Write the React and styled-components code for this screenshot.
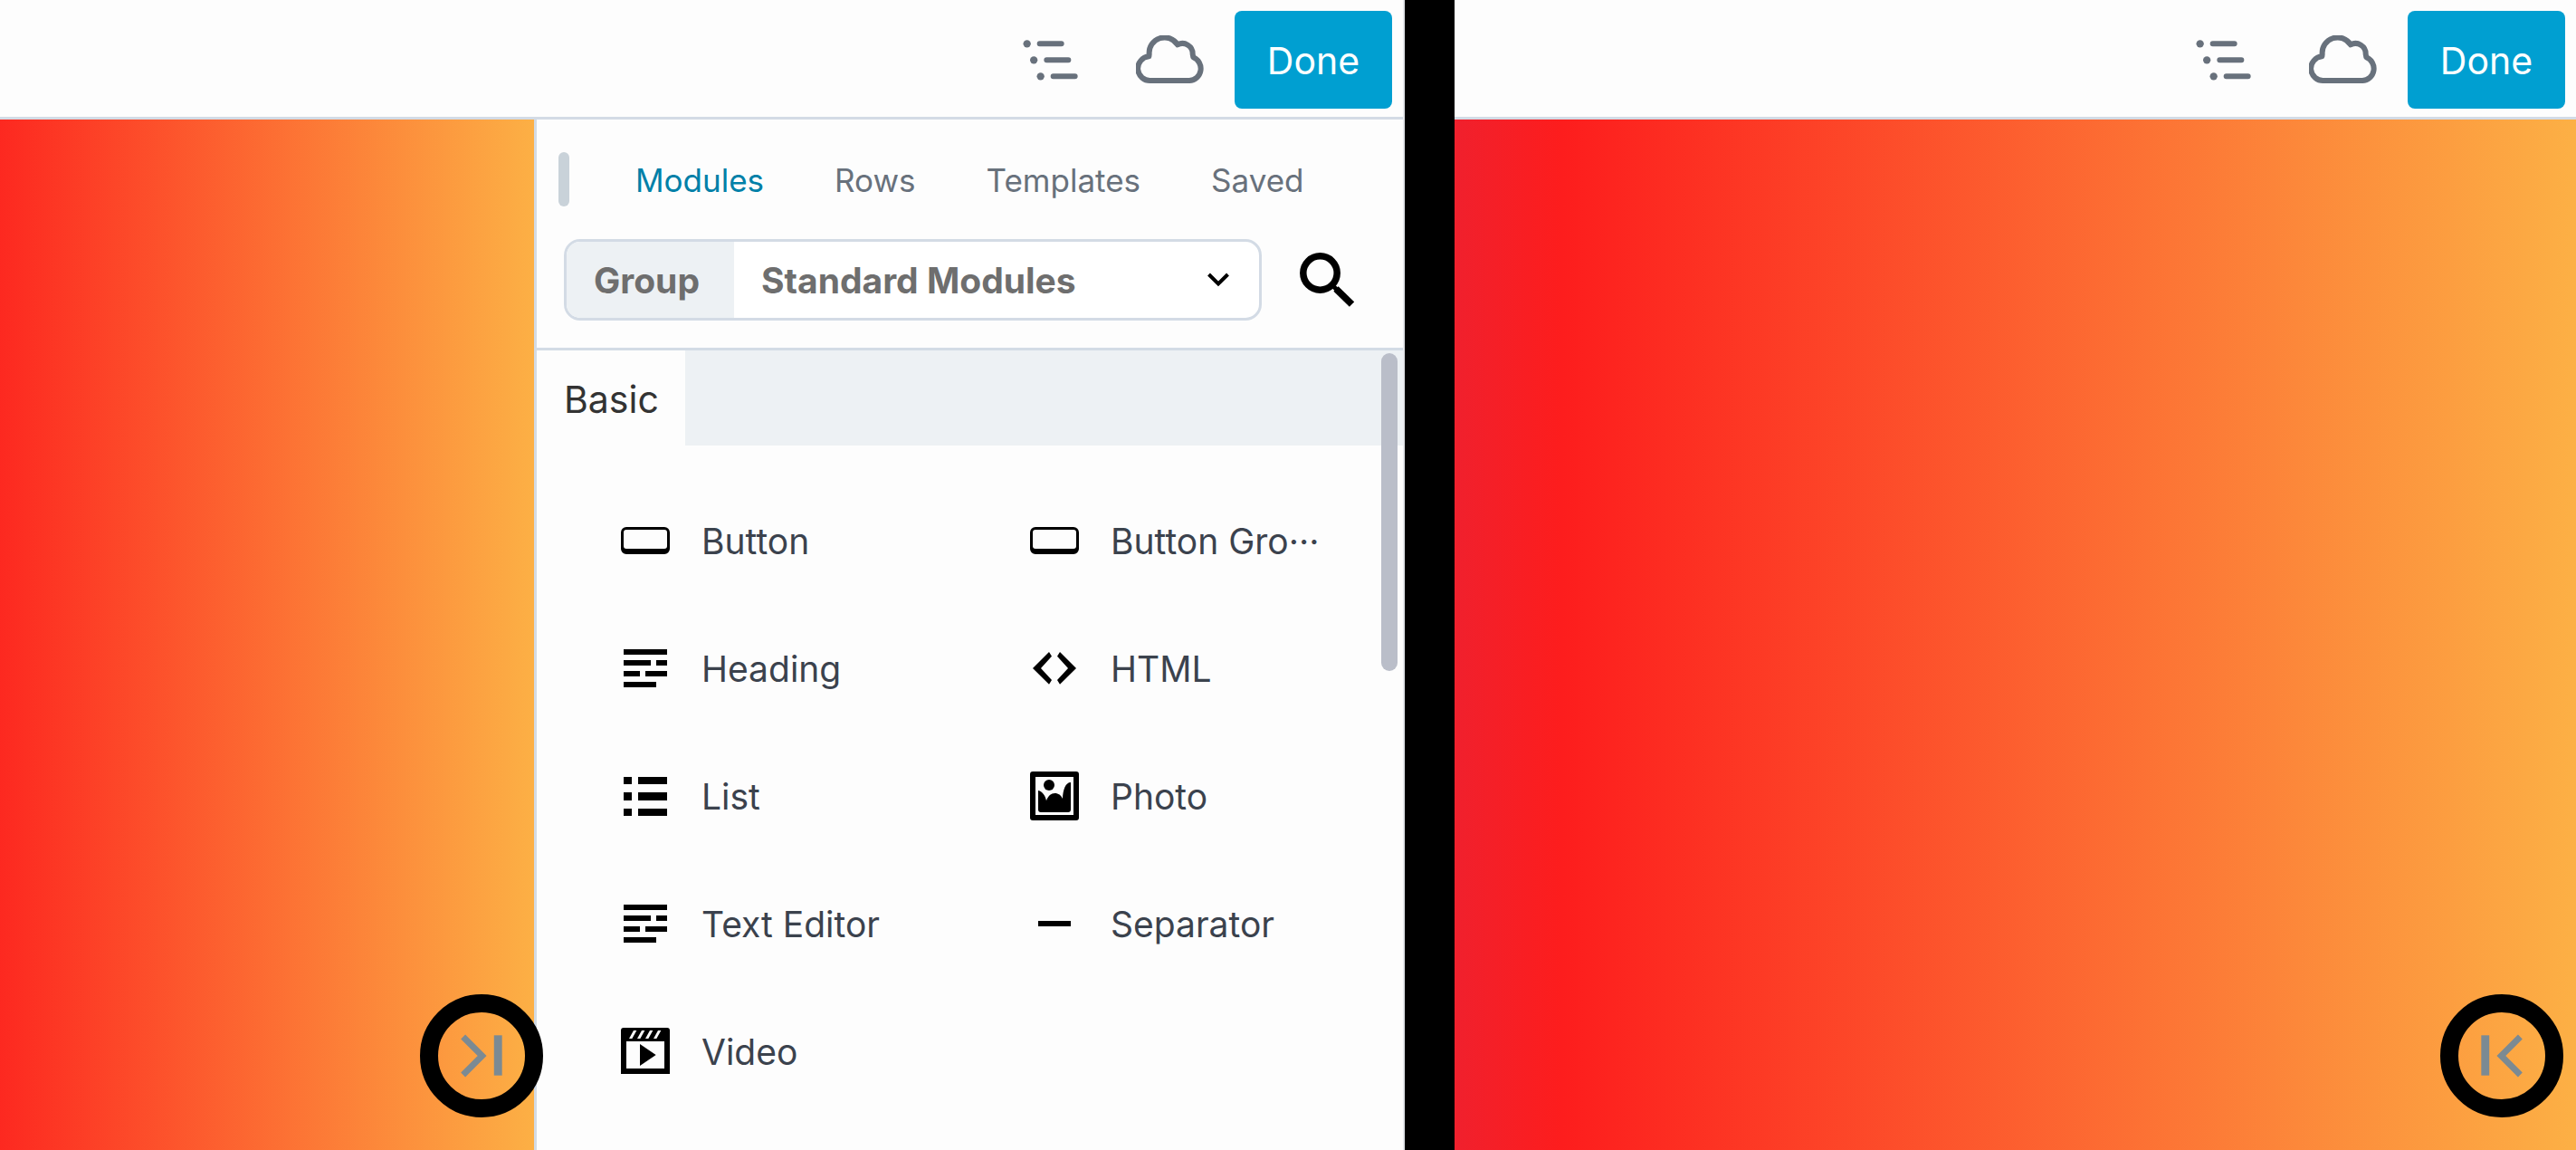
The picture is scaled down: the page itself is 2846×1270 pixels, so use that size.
import React from "react";
import styled, { createGlobalStyle } from "styled-components";

const GlobalStyle = createGlobalStyle`
  *, *::before, *::after { box-sizing: border-box; }
  body {
    margin: 0;
    background: #000;
    font-family: Inter, "Noto Sans", "Liberation Sans", sans-serif;
  }
  button, select { font-family: inherit; }
`;

const Comparison = styled.div`
  display: grid;
  grid-template-columns: minmax(0, 1552fr) minmax(0, 1239fr);
  column-gap: 55px;
  min-height: 100vh;
`;

const Editor = styled.section`
  display: flex;
  flex-direction: column;
  background: #fdfdfd;
  border-right: ${(p) => (p.$edge ? "2px solid #e4e6ea" : "none")};
`;

const TopBar = styled.header`
  display: flex;
  align-items: center;
  justify-content: flex-end;
  padding: 12px 12px 9px;
  border-bottom: 3px solid #d3dbe5;
`;

const IconButton = styled.button`
  display: flex;
  align-items: center;
  justify-content: center;
  padding: 0;
  border: 0;
  background: none;
  color: #68717c;
  cursor: pointer;
`;

const ToolbarIcons = styled.div`
  display: flex;
  align-items: center;
  gap: 64px;
  margin-right: 33px;
`;

const DoneButton = styled.button`
  width: 174px;
  height: 108px;
  padding: 2px 0 0;
  border: 0;
  border-radius: 8px;
  background: #009fd1;
  color: #fff;
  font-size: 41px;
  line-height: 48px;
  cursor: pointer;
`;

const Workspace = styled.main`
  display: flex;
  flex: 1;
`;

const Canvas = styled.div`
  position: relative;
  flex: 1;
  min-width: 0;
  background: linear-gradient(
    to left,
    #fcb045,
    #fd1d1d ${(p) => p.$reach}px,
    #833ab4 ${(p) => p.$reach * 2}px
  );
`;

const ToggleButton = styled.button`
  position: absolute;
  right: ${(p) => p.$right}px;
  bottom: 36px;
  z-index: 1;
  display: flex;
  align-items: center;
  justify-content: center;
  width: 136px;
  height: 136px;
  padding: 0;
  border: 20px solid #000;
  border-radius: 50%;
  background: none;
  color: #7b8a93;
  cursor: pointer;
`;

const Panel = styled.aside`
  display: flex;
  flex-direction: column;
  flex: 0 0 960px;
  border-left: 3px solid #d3dbe5;
`;

const PanelHead = styled.div`
  padding: 0 54px 30px 30px;
  border-bottom: 3px solid #d3dbe5;
`;

const TabRow = styled.nav`
  display: flex;
  align-items: center;
  height: 132px;
  margin-left: -6px;
`;

const DragHandle = styled.span`
  width: 12px;
  height: 60px;
  margin-right: 34px;
  border-radius: 6px;
  background: #c9d2d9;
`;

const Tab = styled.button`
  padding: 2px 39px 0;
  border: 0;
  background: none;
  color: ${(p) => (p.$active ? "#0080a8" : "#68717c")};
  font-size: 35px;
  line-height: 44px;
  cursor: pointer;
`;

const FilterRow = styled.div`
  display: flex;
  align-items: center;
  gap: 42px;
`;

const GroupField = styled.div`
  display: flex;
  flex: 1;
  height: 90px;
  overflow: hidden;
  border: 3px solid #d3dbe5;
  border-radius: 18px;
  background: #fff;
  color: #6e6e6e;
  font-size: 39px;
  font-weight: 700;
`;

const GroupLabel = styled.label`
  display: flex;
  align-items: center;
  width: 185px;
  padding-left: 30px;
  background: #edf1f4;
`;

const SelectBox = styled.div`
  display: grid;
  flex: 1;
  align-items: center;

  > * { grid-area: 1 / 1; }

  > svg {
    justify-self: end;
    margin-right: 32px;
    pointer-events: none;
  }
`;

const GroupSelect = styled.select`
  appearance: none;
  width: 100%;
  height: 100%;
  padding: 0 30px;
  border: 0;
  background: none;
  color: inherit;
  font-size: inherit;
  font-weight: inherit;
`;

const ModuleScroller = styled.div`
  position: relative;
  flex: 1;
`;

const ScrollThumb = styled.span`
  position: absolute;
  top: 3px;
  right: 6px;
  width: 18px;
  height: 351px;
  border-radius: 9px;
  background: #babec9;
`;

const SectionBar = styled.div`
  display: flex;
  height: 105px;
  background: #edf1f4;
`;

const SectionTitle = styled.h2`
  display: flex;
  align-items: center;
  width: 164px;
  margin: 0;
  padding: 2px 0 0 30px;
  background: #fdfdfd;
  color: #333;
  font-size: 41px;
  font-weight: 400;
`;

const ModuleGrid = styled.div`
  display: grid;
  grid-template-columns: repeat(2, minmax(0, 1fr));
  gap: 81px 133px;
  padding: 75px 93px;
`;

const ModuleItem = styled.button`
  display: flex;
  align-items: center;
  gap: 35px;
  height: 60px;
  padding: 0;
  border: 0;
  background: none;
  color: #3b424d;
  font-size: 39px;
  line-height: 48px;
  text-align: left;
  cursor: grab;
`;

const ModuleIcon = styled.span`
  display: flex;
  flex: 0 0 54px;
  justify-content: center;
  color: #000;
`;

const ModuleName = styled.span`
  padding-top: 2px;
  white-space: nowrap;
`;

function OutlineIcon() {
  return (
    <svg width="61" height="45" viewBox="0 0 183 135" aria-hidden="true">
      <g fill="currentColor">
        <circle cx="14" cy="13" r="12.5" />
        <circle cx="36.500" cy="67" r="12.5" />
        <circle cx="59" cy="121" r="12.5" />
      </g>
      <g stroke="currentColor" strokeWidth="18" strokeLinecap="round">
        <path d="M56 13H128M79 67H151M101 121H173" />
      </g>
    </svg>
  );
}

function CloudIcon() {
  return (
    <svg width="76" height="54" viewBox="0 0 228 162" aria-hidden="true">
      <path
        d="M50 150H177A40 40 0 0 0 190 73L188 62A34 34 0 0 0 138 31A51 51 0 0 0 44 62L43 70A40 40 0 0 0 50 150Z"
        fill="none"
        stroke="currentColor"
        strokeWidth="18"
        strokeLinejoin="round"
      />
    </svg>
  );
}

function SearchIcon() {
  return (
    <svg width="60" height="60" viewBox="0 0 60 60" aria-hidden="true">
      <g fill="none" stroke="#000">
        <circle cx="22.500" cy="22.500" r="18.700" strokeWidth="7.500" />
        <path d="M34 34L42 42" strokeWidth="5" />
        <path d="M40 40L57.500 57" strokeWidth="7.500" />
      </g>
    </svg>
  );
}

function ChevronDown() {
  return (
    <svg width="26" height="16" viewBox="0 0 26 16" aria-hidden="true">
      <path d="M2.500 2L13 12.500L23.500 2" fill="none" stroke="#000" strokeWidth="4" />
    </svg>
  );
}

function CollapseIcon({ flipped }) {
  return (
    <svg width="46" height="48" viewBox="0 0 140 146" aria-hidden="true">
      <g transform={flipped ? "translate(140 0) scale(-1 1)" : undefined}>
        <path d="M8 9L72 73L8 137" fill="none" stroke="currentColor" strokeWidth="21" />
        <rect x="112" y="4" width="27" height="135" fill="currentColor" />
      </g>
    </svg>
  );
}

const icons = {
  button: (
    <svg width="54" height="30" viewBox="0 0 162 90" aria-hidden="true">
      <path
        fill="currentColor"
        fillRule="evenodd"
        d="M18 0H144A18 18 0 0 1 162 18V72A18 18 0 0 1 144 90H18A18 18 0 0 1 0 72V18A18 18 0 0 1 18 0ZM18 9A9 9 0 0 0 9 18V63A9 9 0 0 0 18 72H144A9 9 0 0 0 153 63V18A9 9 0 0 0 144 9Z"
      />
    </svg>
  ),
  text: (
    <svg width="48" height="42" viewBox="0 0 48 42" aria-hidden="true">
      <path
        fill="currentColor"
        d="M0 0H48V6H0ZM0 12H30V18H0ZM36 12H48V18H36ZM0 24H18V30H0ZM24 24H48V30H24ZM0 36H36V42H0Z"
      />
    </svg>
  ),
  list: (
    <svg width="48" height="43" viewBox="0 0 48 43" aria-hidden="true">
      <path
        fill="currentColor"
        d="M0 0H9V8H0ZM16 0H48V8H16ZM0 17H9V26H0ZM16 17H48V26H16ZM0 35H9V43H0ZM16 35H48V43H16Z"
      />
    </svg>
  ),
  code: (
    <svg width="48" height="36" viewBox="0 0 144 108" aria-hidden="true">
      <path
        fill="currentColor"
        d="M0 54L54 0L63 14L27 54L63 93L54 107ZM144 54L90 0L81 14L117 54L81 93L90 107Z"
      />
    </svg>
  ),
  photo: (
    <svg width="54" height="54" viewBox="0 0 162 162" aria-hidden="true">
      <path
        fill="currentColor"
        fillRule="evenodd"
        d="M9 0H153Q162 0 162 9V153Q162 162 153 162H9Q0 162 0 153V9Q0 0 9 0ZM18 18V144H144V18Z"
      />
      <circle cx="63" cy="45" r="18" fill="currentColor" />
      <path
        fill="currentColor"
        d="M27 63C42 66 51 82 54 97C60 80 70 72 82 72C94 72 103 79 108 90C109 60 118 36 135 36V126Q135 135 126 135H36Q27 135 27 126Z"
      />
    </svg>
  ),
  separator: (
    <svg width="36" height="6" viewBox="0 0 36 6" aria-hidden="true">
      <path fill="currentColor" d="M0 0H36V6H0Z" />
    </svg>
  ),
  video: (
    <svg width="54" height="52" viewBox="0 0 162 156" aria-hidden="true">
      <path
        fill="currentColor"
        fillRule="evenodd"
        d="M9 0H153Q162 0 162 9V153H0V9Q0 0 9 0ZM18 45V135H144V45ZM27 36H37L52 9H42ZM54 36H64L79 9H69ZM81 36H91L106 9H96ZM108 36H118L133 9H123Z"
      />
      <path fill="currentColor" d="M63 54L116 90L63 126Z" />
    </svg>
  ),
};

const tabs = ["Modules", "Rows", "Templates", "Saved"];

const modules = [
  { name: "Button", icon: "button" },
  { name: "Button Gro···", icon: "button" },
  { name: "Heading", icon: "text" },
  { name: "HTML", icon: "code" },
  { name: "List", icon: "list" },
  { name: "Photo", icon: "photo" },
  { name: "Text Editor", icon: "text" },
  { name: "Separator", icon: "separator" },
  { name: "Video", icon: "video" },
];

function EditorBar() {
  return (
    <TopBar>
      <ToolbarIcons>
        <IconButton type="button" aria-label="Outline">
          <OutlineIcon />
        </IconButton>
        <IconButton type="button" aria-label="Cloud">
          <CloudIcon />
        </IconButton>
      </ToolbarIcons>
      <DoneButton type="button">Done</DoneButton>
    </TopBar>
  );
}

function ContentPanel() {
  return (
    <Panel>
      <PanelHead>
        <TabRow>
          <DragHandle />
          {tabs.map((tab) => (
            <Tab key={tab} type="button" $active={tab === "Modules"}>
              {tab}
            </Tab>
          ))}
        </TabRow>
        <FilterRow>
          <GroupField>
            <GroupLabel htmlFor="module-group">Group</GroupLabel>
            <SelectBox>
              <GroupSelect id="module-group" defaultValue="standard">
                <option value="standard">Standard Modules</option>
              </GroupSelect>
              <ChevronDown />
            </SelectBox>
          </GroupField>
          <IconButton type="button" aria-label="Search">
            <SearchIcon />
          </IconButton>
        </FilterRow>
      </PanelHead>
      <ModuleScroller>
        <SectionBar>
          <SectionTitle>Basic</SectionTitle>
        </SectionBar>
        <ModuleGrid>
          {modules.map((module) => (
            <ModuleItem key={module.name} type="button">
              <ModuleIcon>{icons[module.icon]}</ModuleIcon>
              <ModuleName>{module.name}</ModuleName>
            </ModuleItem>
          ))}
        </ModuleGrid>
        <ScrollThumb />
      </ModuleScroller>
    </Panel>
  );
}

export default function App() {
  return (
    <>
      <GlobalStyle />
      <Comparison>
        <Editor $edge>
          <EditorBar />
          <Workspace>
            <Canvas $reach={640}>
              <ToggleButton type="button" aria-label="Collapse panel" $right={-10}>
                <CollapseIcon />
              </ToggleButton>
            </Canvas>
            <ContentPanel />
          </Workspace>
        </Editor>
        <Editor>
          <EditorBar />
          <Workspace>
            <Canvas $reach={1120}>
              <ToggleButton type="button" aria-label="Expand panel" $right={14}>
                <CollapseIcon flipped />
              </ToggleButton>
            </Canvas>
          </Workspace>
        </Editor>
      </Comparison>
    </>
  );
}
